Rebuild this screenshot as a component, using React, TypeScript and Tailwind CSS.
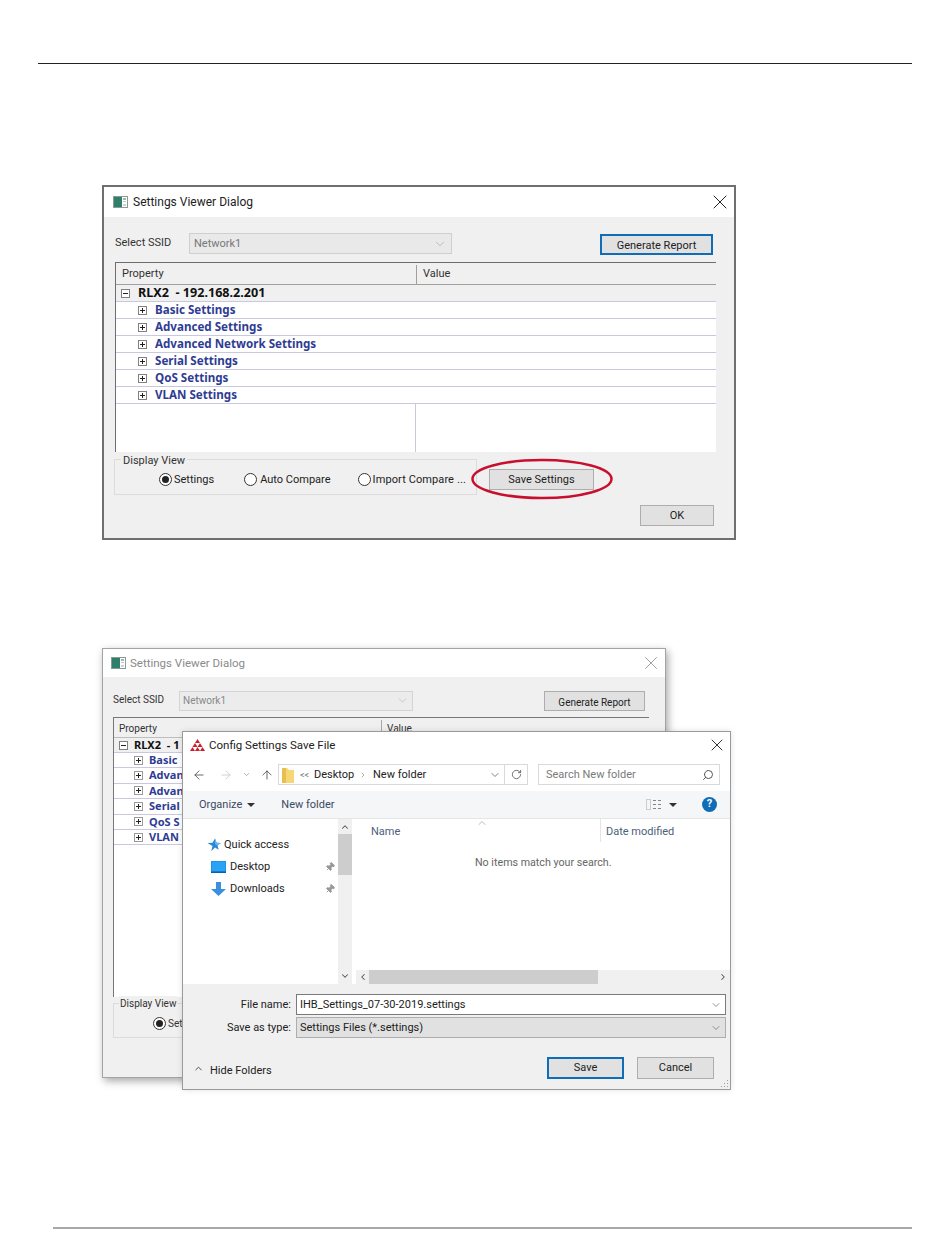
import { ArrowLeft, ArrowRight, ArrowUp, ChevronDown, ChevronLeft, ChevronRight, ChevronUp, Pin, RotateCw, Search, X } from "lucide-react";
import type { ReactNode } from "react";

const ui = "font-['Roboto','Noto_Sans',sans-serif]";
const tree = "font-['Noto_Sans',sans-serif] font-bold";

function AppIcon() {
	return (
		<svg width="15" height="12" viewBox="0 0 15 12" className="shrink-0">
			<rect x="0.5" y="0.5" width="14" height="11" fill="#fff" stroke="#8a9a94" />
			<rect x="1" y="1" width="8" height="10" fill="#2f7f6b" />
			<rect x="10" y="2" width="3" height="2" fill="#9db8ac" />
			<rect x="10" y="5" width="3" height="1" fill="#c4c4c4" />
			<rect x="10" y="8" width="3" height="2" fill="#c9d6cf" />
		</svg>
	);
}

function Sign({ minus = false, faded = false }: { minus?: boolean; faded?: boolean }) {
	return (
		<svg width="9" height="9" viewBox="0 0 9 9" className="shrink-0">
			<rect x="0.5" y="0.5" width="8" height="8" fill="#fff" stroke={faded ? "#9a9a9a" : "#808080"} />
			<path d="M2 4.5h5" stroke="#222" />
			{!minus && <path d="M4.5 2v5" stroke="#222" />}
		</svg>
	);
}

function Radio({ checked = false }: { checked?: boolean }) {
	return (
		<span className="flex h-[13px] w-[13px] shrink-0 items-center justify-center rounded-full border border-[#333] bg-white">
			{checked && <span className="h-[7px] w-[7px] rounded-full bg-[#222]" />}
		</span>
	);
}

function WinButton({ children, className }: { children: ReactNode; className: string }) {
	return (
		<div className={`flex items-center justify-center bg-[#e1e1e1] text-[11px] text-[#222] ${ui} ${className}`}>
			{children}
		</div>
	);
}

function MainTree() {
	const rows = ["Basic Settings", "Advanced Settings", "Advanced Network Settings", "Serial Settings", "QoS Settings", "VLAN Settings"];
	return (
		<div className="flex h-[190px] w-[601px] flex-col border-t border-l border-[#6e6e6e] bg-white">
			<div className={`flex h-[22px] shrink-0 border-b border-[#a0a0a0] bg-[#f0f0f0] pt-[2px] text-[11px] text-[#333] ${ui}`}>
				<div className="flex w-[301px] items-center border-r border-[#a0a0a0] pl-[6px]">Property</div>
				<div className="flex items-center pl-[6px]">Value</div>
			</div>
			<div className="flex h-[17px] shrink-0 items-center gap-[8px] border-b border-[#c8c8e0] bg-[#f0f0f0] pl-[5px]">
				<Sign minus />
				<span className={`text-[12.6px] text-[#111] ${tree}`}>RLX2&nbsp; - 192.168.2.201</span>
			</div>
			{rows.map((r) => (
				<div key={r} className="flex h-[17px] shrink-0 items-center gap-[8px] border-b border-[#c8c8e0] pl-[22px]">
					<Sign />
					<span className={`text-[11.6px] text-[#2f3c93] ${tree}`}>{r}</span>
				</div>
			))}
			<div className="ml-[299px] min-h-0 flex-1 border-l border-[#c8c8e0]" />
		</div>
	);
}

function MainDialog() {
	return (
		<div className="ml-[102px] flex h-[355px] w-[634px] flex-col border-2 border-[#6f6f6f] bg-[#f0f0f0]">
			<div className={`flex h-[30px] shrink-0 items-center bg-white pl-[9px] pr-[2px] text-[12px] text-[#222] ${ui}`}>
				<AppIcon />
				<span className="ml-[5px]">Settings Viewer Dialog</span>
				<X size={24} strokeWidth={1} className="ml-auto text-[#222]" />
			</div>
			<div className="flex pl-[11px] pt-4">
				<div className={`flex h-[21px] w-[74px] items-center text-[11px] text-[#333] ${ui}`}>Select SSID</div>
				<div className={`flex h-[21px] w-[263px] items-center justify-between border border-[#cfcfcf] bg-[#e9e9e9] pl-[4px] pr-[4px] text-[11px] text-[#777] ${ui}`}>
					<span className="mt-[2px]">Network1</span>
					<ChevronDown size={14} strokeWidth={1} className="text-[#999]" />
				</div>
				<WinButton className="ml-[148px] mt-px h-[21px] w-[113px] border-2 border-[#0f6cb5] pt-[3px]">Generate Report</WinButton>
			</div>
			<div className="ml-[11px] mt-[7px]">
				<MainTree />
			</div>
			<div className="relative ml-[10px] mt-[7px] flex">
				<div className={`relative flex h-[36px] w-[363px] items-center border border-[#dcdcdc] text-[11px] text-[#222] ${ui}`}>
					<span className="absolute -top-[7px] left-[6px] bg-[#f0f0f0] px-[2px] text-[#333]">Display View</span>
					<div className="ml-[44px] mt-[4px] flex items-center gap-[2px]">
						<Radio checked />
						<span className="mt-[2px]">Settings</span>
					</div>
					<div className="ml-[30px] mt-[4px] flex items-center gap-[3px]">
						<Radio />
						<span className="mt-[2px]">Auto Compare</span>
					</div>
					<div className="ml-[27px] mt-[4px] flex items-center gap-[2px] whitespace-nowrap tracking-[0.1px]">
						<Radio />
						<span className="mt-[2px]">Import Compare ...</span>
					</div>
				</div>
				<WinButton className="ml-[12px] mt-[10px] h-[21px] w-[105px] border border-[#adadad] pt-[2px]">Save Settings</WinButton>
				<svg width="143" height="42" viewBox="0 0 143 42" className="absolute left-[357px] -top-[1px]">
					<ellipse cx="71" cy="21" rx="69.5" ry="19" fill="none" stroke="#c8102e" strokeWidth="2.5" />
				</svg>
			</div>
			<div className="mt-[10px] flex justify-end pr-[20px]">
				<WinButton className="h-[21px] w-[74px] border border-[#adadad] pt-[2px]">OK</WinButton>
			</div>
		</div>
	);
}

function BehindDialog() {
	const rows = ["Basic", "Advan", "Advan", "Serial", "QoS S", "VLAN"];
	return (
		<div className="ml-[102px] flex h-[430px] w-[564px] flex-col border border-[#a3a3a3] bg-[#f0f0f0] shadow-[2px_3px_8px_rgba(0,0,0,0.35)]">
			<div className={`flex h-[28px] shrink-0 items-center bg-white pl-[8px] pr-[3px] text-[11.5px] text-[#8a8a8a] ${ui}`}>
				<AppIcon />
				<span className="ml-[4px] mt-[2px]">Settings Viewer Dialog</span>
				<X size={22} strokeWidth={1} className="ml-auto text-[#999]" />
			</div>
			<div className="flex pl-[10px] pt-[14px]">
				<div className={`flex h-[17px] w-[66px] items-center text-[10px] text-[#333] ${ui}`}>Select SSID</div>
				<div className={`flex h-[20px] w-[234px] items-center justify-between border border-[#d4d4d4] bg-[#ececec] pb-px pl-[3px] pr-[3px] text-[10px] text-[#888] ${ui}`}>
					Network1
					<ChevronDown size={13} strokeWidth={1} className="text-[#aaa]" />
				</div>
				<WinButton className="ml-[131px] h-[20px] w-[101px] border border-[#adadad] pt-[3px] text-[10px]!">Generate Report</WinButton>
			</div>
			<div className="ml-[10px] mt-[6px] flex h-[280px] w-[536px] flex-col border-t border-l border-[#777] bg-white">
				<div className={`flex h-[20px] shrink-0 border-b border-[#bdbdbd] bg-[#f0f0f0] pt-[2px] text-[10px] text-[#333] ${ui}`}>
					<div className="flex w-[268px] items-center border-r border-[#a8a8a8] pl-[5px]">Property</div>
					<div className="flex items-center pl-[5px]">Value</div>
				</div>
				<div className="flex h-[15px] shrink-0 items-center gap-[6px] border-b border-[#c8c8e0] bg-[#f0f0f0] pl-[5px]">
					<Sign minus />
					<span className={`text-[11px] text-[#111] ${tree}`}>RLX2&nbsp; - 1</span>
				</div>
				{rows.map((r, i) => (
					<div key={i} className="flex h-[15.4px] shrink-0 items-center gap-[6px] border-b border-[#c8c8e0] pl-[20px]">
						<Sign faded />
						<span className={`text-[11px] text-[#2f3c93] ${tree}`}>{r}</span>
					</div>
				))}
			</div>
			<div className={`relative ml-[10px] mt-[6px] h-[35px] w-[200px] border border-[#dcdcdc] text-[10px] text-[#333] ${ui}`}>
				<span className="absolute -top-[8px] left-[5px] bg-[#f0f0f0] px-[1px]">Display View</span>
				<div className="ml-[39px] mt-[12px] flex items-center gap-[2px]">
					<Radio checked />
					Settings
				</div>
			</div>
		</div>
	);
}

function StarIcon() {
	return (
		<svg width="14" height="14" viewBox="0 0 14 14" className="shrink-0">
			<path d="M8 0.5l1.6 4.2 4.2.2-3.3 2.7 1.2 4.2L8 9.4l-3.8 3.9L5.5 8 .5 5l5-.3z" fill="#2b88d8" />
			<path d="M8 0.5l1.6 4.2 4.2.2-3.3 2.7L8 6z" fill="#6cb7ee" />
		</svg>
	);
}

function DesktopIcon() {
	return (
		<svg width="15" height="12" viewBox="0 0 15 12" className="shrink-0">
			<rect width="15" height="12" fill="#1a94ef" />
			<rect x="0" y="10.5" width="15" height="1.5" fill="#0d5fa8" />
			<rect x="1" y="1" width="13" height="9" fill="#2aa3f5" />
		</svg>
	);
}

function DownloadIcon() {
	return (
		<svg width="15" height="14" viewBox="0 0 15 14" className="shrink-0">
			<path d="M5 0h5v7h5l-7.5 7L0 7h5z" fill="#3a8fe0" />
		</svg>
	);
}

function RedLionLogo() {
	// pyramid of small triangles
	const tris: [number, number][] = [[5, 0], [2.5, 4], [7.5, 4], [0, 8], [5, 8], [10, 8]];
	return (
		<svg width="15" height="12" viewBox="0 0 15 12" className="shrink-0">
			{tris.map(([x, y]) => (
				<path key={`${x}-${y}`} d={`M${x} ${y + 4}l2.5-4 2.5 4z`} fill="#c8202f" />
			))}
		</svg>
	);
}

function ViewIcon() {
	return (
		<svg width="15" height="11" viewBox="0 0 15 11" className="block">
			<rect x="0.5" y="0.5" width="4" height="10" fill="none" stroke="#9aa5b0" strokeDasharray="1 1" />
			<path d="M7 1.5h3M12 1.5h3M7 5.5h3M12 5.5h3M7 9.5h3M12 9.5h3" stroke="#7d8791" />
		</svg>
	);
}

function SaveDialog() {
	return (
		<div className={`absolute left-[182px] top-[83px] flex h-[359px] w-[549px] flex-col border border-[#9a9a9a] bg-white text-[#333] shadow-[0_0_6px_rgba(0,0,0,0.12)] ${ui}`}>
			<div className="flex h-[26px] shrink-0 items-center pl-[7px] pr-[3px] text-[11.5px] text-[#222]">
				<RedLionLogo />
				<span className="ml-[4px] mt-[2px]">Config Settings Save File</span>
				<X size={20} strokeWidth={1.1} className="ml-auto text-[#222]" />
			</div>
			<div className="flex h-[33px] shrink-0 items-center whitespace-nowrap text-[11px]">
				<ArrowLeft size={14} strokeWidth={1.5} className="ml-[9px] text-[#555]" />
				<ArrowRight size={14} strokeWidth={1.5} className="ml-[13px] text-[#ccc]" />
				<ChevronDown size={9} strokeWidth={2} className="ml-[9px] text-[#999]" />
				<ArrowUp size={14} strokeWidth={1.5} className="ml-[9px] text-[#555]" />
				<div className="ml-[4px] flex h-[21px] w-[250px] items-center border border-[#d9d9d9] pl-[3px]">
					<svg width="12" height="16" viewBox="0 0 12 16" className="shrink-0">
						<path d="M0 1h5l2 2h5v13H0z" fill="#f7d774" />
						<path d="M0 1h4v15H0z" fill="#e8be4e" />
					</svg>
					<span className="ml-[6px] mt-[2px] w-[8px] text-[9px] text-[#777]">&lt;&lt;</span>
					<span className="ml-[6px] mt-[2px] w-[39px] text-[#222]">Desktop</span>
					<ChevronRight size={8} className="ml-[6px] text-[#888]" />
					<span className="ml-[6px] mt-[2px] w-[50px] text-[#222]">New folder</span>
					<ChevronDown size={12} strokeWidth={1.5} className="ml-[66px] text-[#555]" />
					<div className="ml-[3px] flex h-full flex-1 items-center justify-center border-l border-[#d9d9d9]">
						<RotateCw size={11} className="text-[#666]" />
					</div>
				</div>
				<div className="ml-[10px] flex h-[21px] w-[182px] items-center justify-between border border-[#d9d9d9] pl-[7px] pr-[5px] text-[#7a7a7a]">
					<span className="mt-[2px]">Search New folder</span>
					<Search size={12} className="-scale-x-100 text-[#555]" />
				</div>
			</div>
			<div className="flex h-[27px] shrink-0 items-center whitespace-nowrap bg-[#f5f6f7] pr-[13px] text-[11px] text-[#3b4a63]">
				<span className="ml-[16px] mt-[2px]">Organize</span>
				<span className="ml-[5px] h-0 w-0 border-x-[4px] border-t-[4px] border-x-transparent border-t-[#333]" />
				<span className="ml-[26px] mt-[2px]">New folder</span>
				<span className="ml-auto"><ViewIcon /></span>
				<span className="ml-[8px] h-0 w-0 border-x-[4px] border-t-[4px] border-x-transparent border-t-[#333]" />
				<span className="ml-[25px] flex h-[15px] w-[15px] shrink-0 items-center justify-center rounded-full bg-[#0f6cb5] text-[11px] font-bold text-white">?</span>
			</div>
			<div className="flex h-[166px] shrink-0 border-t border-[#e5e5e5]">
				<div className="flex w-[155px] flex-col pl-[24px] pt-[17px] text-[11px] text-[#222]">
					<div className="flex h-[17px] items-center gap-[3px]">
						<StarIcon />
						<span className="mt-[2px]">Quick access</span>
					</div>
					<div className="ml-[4px] mt-[5px] flex h-[17px] items-center gap-[4px]">
						<DesktopIcon />
						<span className="mt-[2px]">Desktop</span>
						<Pin size={10} fill="#999" className="ml-auto mr-[3px] rotate-45 text-[#999]" />
					</div>
					<div className="ml-[4px] mt-[5px] flex h-[17px] items-center gap-[4px]">
						<DownloadIcon />
						<span className="mt-[2px]">Downloads</span>
						<Pin size={10} fill="#999" className="ml-auto mr-[3px] rotate-45 text-[#999]" />
					</div>
				</div>
				<div className="flex w-[14px] flex-col items-center justify-between bg-[#f0f0f0] py-[3px]">
					<ChevronUp size={10} strokeWidth={2.5} className="text-[#555]" />
					<div className="mb-auto mt-[2px] h-[41px] w-full bg-[#cdcdcd]" />
					<ChevronDown size={10} strokeWidth={2.5} className="text-[#555]" />
				</div>
				<div className="flex min-w-0 flex-1 flex-col">
					<div className="relative flex h-[23px] text-[11px] text-[#4c607a]">
						<span className="ml-[19px] mt-[5px]">Name</span>
						<ChevronUp size={12} strokeWidth={1} className="absolute left-[124px] -top-[2px] text-[#777]" />
						<span className="absolute left-[248px] top-0 h-full whitespace-nowrap border-l border-[#e5e5e5] pl-[5px] pt-[5px]">Date modified</span>
					</div>
					<div className="mt-[13px] whitespace-nowrap pl-[123px] text-[10.7px] text-[#666]">No items match your search.</div>
					<div className="ml-[4px] mt-auto flex h-[14px] shrink-0 items-center bg-[#f0f0f0]">
						<ChevronLeft size={10} strokeWidth={2.5} className="ml-[2px] text-[#555]" />
						<div className="ml-[1px] h-full w-[229px] bg-[#cdcdcd]" />
						<ChevronRight size={10} strokeWidth={2.5} className="ml-auto mr-[2px] text-[#555]" />
					</div>
				</div>
			</div>
			<div className="relative flex-1 bg-[#f0f0f0] text-[11px] text-[#222]">
				<div className="mt-[10px] flex items-center">
					<div className="mt-[2px] w-[108px] text-right">File name:</div>
					<div className="ml-[5px] flex h-[21px] w-[430px] items-center justify-between border border-[#7a7a7a] bg-white pl-[3px] pr-[3px]">
						<span className="mt-[2px]">IHB_Settings_07-30-2019.settings</span>
						<ChevronDown size={12} strokeWidth={1.2} className="text-[#555]" />
					</div>
				</div>
				<div className="mt-[2px] flex items-center">
					<div className="mt-[2px] w-[108px] text-right">Save as type:</div>
					<div className="ml-[5px] flex h-[21px] w-[430px] items-center justify-between border border-[#adadad] bg-[#e1e1e1] pl-[3px] pr-[3px]">
						<span className="mt-[2px]">Settings Files (*.settings)</span>
						<ChevronDown size={12} strokeWidth={1.2} className="text-[#555]" />
					</div>
				</div>
				<div className="mt-[19px] flex items-center pr-[16px]">
					<ChevronUp size={11} strokeWidth={2} className="ml-[10px] text-[#444]" />
					<span className="ml-[6px] mt-[6px]">Hide Folders</span>
					<WinButton className="ml-auto h-[22px] w-[77px] border-2 border-[#0f6cb5]">Save</WinButton>
					<WinButton className="ml-[13px] h-[22px] w-[77px] border border-[#adadad]">Cancel</WinButton>
				</div>
				<svg width="9" height="9" viewBox="0 0 9 9" className="absolute bottom-[1px] right-[1px]">
					<path d="M7 1h1v1H7zM4 4h1v1H4zM7 4h1v1H7zM1 7h1v1H1zM4 7h1v1H4zM7 7h1v1H7z" fill="#a0a0a0" />
				</svg>
			</div>
		</div>
	);
}

export default function App() {
	return (
		<div className="h-[1260px] w-[950px] overflow-hidden bg-white">
			<div className="ml-[38px] mt-[63px] h-px w-[874px] bg-[#222]" />
			<div className="mt-[121px]">
				<MainDialog />
			</div>
			<div className="relative mt-[108px]">
				<BehindDialog />
				<SaveDialog />
			</div>
			<div className="ml-[53px] mt-[149px] h-[2px] w-[859px] bg-[#a8a8a8]" />
		</div>
	);
}
